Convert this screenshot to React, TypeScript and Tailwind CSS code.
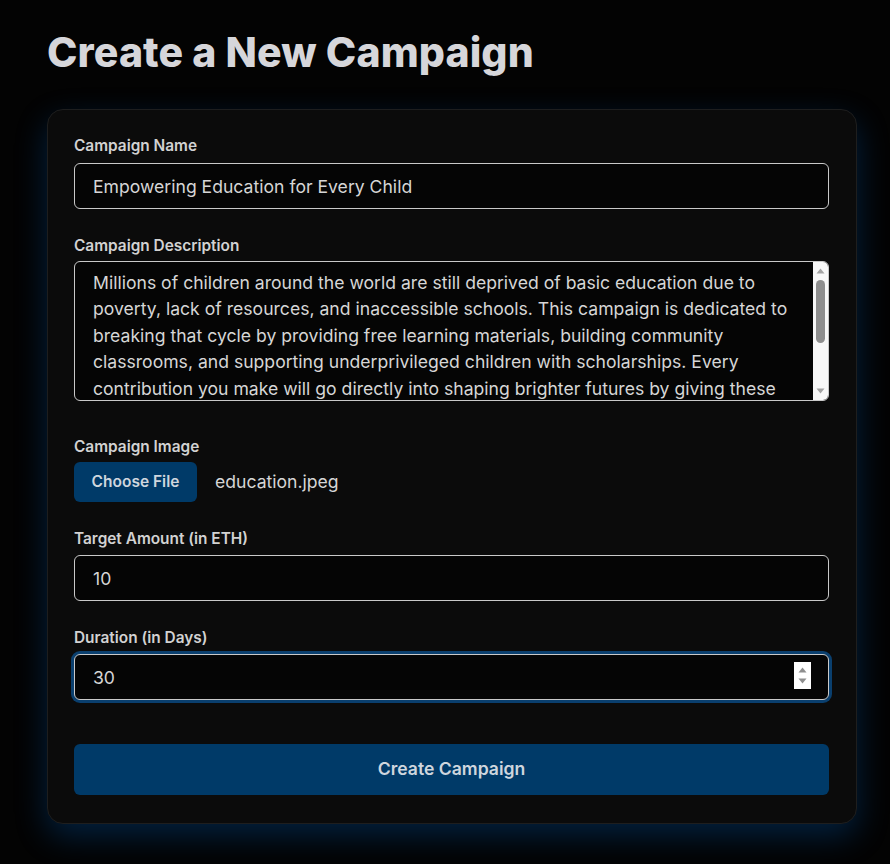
import React from "react";

const desc =
  "Millions of children around the world are still deprived of basic education due to poverty, lack of resources, and inaccessible schools. This campaign is dedicated to breaking that cycle by providing free learning materials, building community classrooms, and supporting underprivileged children with scholarships. Every contribution you make will go directly into shaping brighter futures by giving these children the tools they need to learn, grow, and thrive. Together, we can make sure that no child is left behind simply because of where they were born.";

export default function App() {
  return (
    <div
      className="min-h-[864px] bg-[#030303] pl-[47px] pt-[25px]"
      style={{ fontFamily: "Inter, 'Noto Sans', sans-serif" }}
    >
      <h1 className="text-[41px] font-extrabold leading-[54px] text-[#d6d6da] tracking-[0.1px]">
        Create a New Campaign
      </h1>
      <div className="mt-[30px] w-[810px] rounded-[16px] border border-[#1e1e1e] bg-[#0b0b0b] pl-[26px] pr-[27px] pt-[26px] pb-[28px] shadow-[0_12px_32px_rgba(0,110,220,0.28)]">
        <div className="mb-[27px]">
          <label className="mb-[7px] block text-[15.4px] font-semibold leading-[20px] text-[#d2d2d2]">
            Campaign Name
          </label>
          <input
            type="text"
            defaultValue="Empowering Education for Every Child"
            className="block h-[46px] w-full rounded-[6px] border border-[#c9c9c9] bg-[#050505] px-[18px] text-[17.6px] text-[#d6d6d6] outline-none"
          />
        </div>
        <div className="mb-[36px]">
          <label className="mb-[5px] block text-[15.4px] font-semibold leading-[20px] text-[#d2d2d2]">
            Campaign Description
          </label>
          <div className="relative">
            <textarea
              defaultValue={desc}
              className="block h-[140px] w-full resize-none overflow-hidden rounded-[6px] border border-[#c9c9c9] bg-[#050505] pl-[18px] pr-[33px] py-[8px] text-[17.6px] leading-[26.4px] text-[#d6d6d6] outline-none"
            />
            <div className="absolute right-[1px] top-[1px] bottom-[1px] w-[15px] rounded-r-[5px] bg-[#f8f8f8]">
              <svg className="absolute left-[3px] top-[6px]" width="9" height="6" viewBox="0 0 9 6">
                <path d="M4.5 0.5 L8.5 5.5 L0.5 5.5 Z" fill="#a3a3a3" />
              </svg>
              <div className="absolute left-[3px] top-[18px] h-[63px] w-[9px] rounded-full bg-[#8e8e8e]" />
              <svg className="absolute left-[3px] bottom-[6px]" width="9" height="6" viewBox="0 0 9 6">
                <path d="M0.5 0.5 L8.5 0.5 L4.5 5.5 Z" fill="#a3a3a3" />
              </svg>
            </div>
          </div>
        </div>
        <div className="mb-[27px]">
          <label className="mb-[5px] block text-[15.4px] font-semibold leading-[20px] text-[#d2d2d2]">
            Campaign Image
          </label>
          <div className="flex items-center">
            <div className="flex h-[40px] w-[123px] items-center justify-center rounded-[6px] bg-[#003a68] text-[15.5px] font-semibold text-[#cfd6de]">
              Choose File
            </div>
            <span className="ml-[18px] text-[17.6px] text-[#d6d6d6]">education.jpeg</span>
          </div>
        </div>
        <div className="mb-[27px]">
          <label className="mb-[6px] block text-[15.4px] font-semibold leading-[20px] text-[#d2d2d2]">
            Target Amount (in ETH)
          </label>
          <input
            type="number"
            defaultValue="10"
            className="block h-[46px] w-full rounded-[6px] border border-[#c9c9c9] bg-[#050505] px-[18px] text-[17.6px] text-[#d6d6d6] outline-none [appearance:textfield] [&::-webkit-inner-spin-button]:appearance-none [&::-webkit-outer-spin-button]:appearance-none"
          />
        </div>
        <div className="mb-[44px]">
          <label className="mb-[6px] block text-[15.4px] font-semibold leading-[20px] text-[#d2d2d2]">
            Duration (in Days)
          </label>
          <div className="relative">
            <input
              type="number"
              defaultValue="30"
              className="block h-[46px] w-full rounded-[6px] border border-[#c9c9c9] bg-[#050505] px-[18px] text-[17.6px] text-[#d6d6d6] outline-none ring-[3px] ring-[#0a3f6e] [appearance:textfield] [&::-webkit-inner-spin-button]:appearance-none [&::-webkit-outer-spin-button]:appearance-none"
            />
            <div className="absolute right-[18px] top-[8px] h-[27px] w-[17px] bg-white">
              <svg className="absolute left-[4px] top-[5px]" width="9" height="6" viewBox="0 0 9 6">
                <path d="M4.5 0.5 L8.5 5.5 L0.5 5.5 Z" fill="#8f8f8f" />
              </svg>
              <svg className="absolute left-[4px] top-[16px]" width="9" height="6" viewBox="0 0 9 6">
                <path d="M0.5 0.5 L8.5 0.5 L4.5 5.5 Z" fill="#8f8f8f" />
              </svg>
            </div>
          </div>
        </div>
        <button className="flex h-[51px] w-full items-center justify-center rounded-[6px] bg-[#003a68] text-[17.6px] font-semibold text-[#cfd6de]">
          Create Campaign
        </button>
      </div>
    </div>
  );
}
